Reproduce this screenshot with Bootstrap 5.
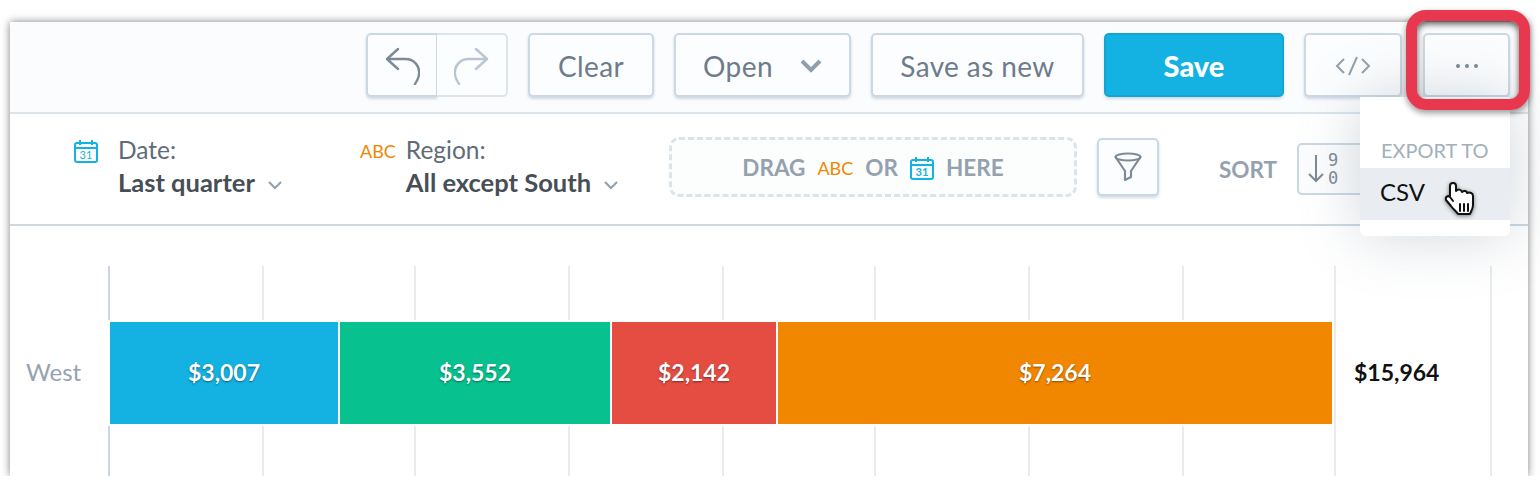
<!DOCTYPE html>
<html lang="en">
<head>
<meta charset="UTF-8" />
<title>Analytical Designer</title>
<link href="https://cdn.jsdelivr.net/npm/bootstrap@5.3.3/dist/css/bootstrap.min.css" rel="stylesheet">
<style>
    body { background: #fff; font-family: Lato, "Open Sans", sans-serif; overflow: hidden; }
    .stage { margin: 22px 12px 0 10px; height: 454px; position: relative; background: #fff; box-shadow: 0 0 8px rgba(0,0,0,.5); }

    /* top toolbar */
    .tool-row { height: 92px; padding: 11px 18px 0 0; background: #fbfcfd; border-bottom: 2px solid #dde4eb; gap: 20px; }
    .tool-btn { height: 64px; padding: 1px 0 0; background: #fcfdfe; border: 2px solid #ccd8e4; border-radius: 5px; color: #6d7c8b; font-size: 28px; letter-spacing: .4px; box-shadow: 0 2px 3px rgba(170,187,204,.55); }
    .tool-btn:hover { background: #fcfdfe; border-color: #ccd8e4; color: #6d7c8b; }
    .w-undo { width: 71px; border-radius: 5px 0 0 5px; border-right-width: 1px; }
    .w-redo, .w-redo:hover { width: 71px; border-radius: 0 5px 5px 0; border-color: #dde4eb; border-left: 0; box-shadow: none; }
    .w-clear { width: 126px; }
    .w-open { width: 177px; gap: 27px; }
    .w-saveas { width: 213px; }
    .w-code { width: 98px; margin-right: 1px; }
    .w-more { width: 87px; }
    .w-save, .w-save:hover { width: 180px; background: #14b2e2; border-color: #12a5d2; color: #fff; font-size: 29px; font-weight: 900; letter-spacing: 0; }

    /* filter row */
    .filter-row { height: 112px; border-bottom: 2px solid #ccd8e2; padding-left: 64px; }
    .pick { font-size: 24.5px; line-height: 32px; color: #5f6c78; margin-top: -6px; }
    .pick strong { display: block; color: #464e56; font-size: 25.5px; font-weight: 700; }
    .pick-date { width: 286px; gap: 20px; }
    .pick-date > svg { margin-top: -1px; }
    .pick-region { width: 309px; gap: 10px; }
    .pick-region > .abc { margin-top: -5px; }
    .abc { color: #f18600; font-size: 18px; line-height: 32px; }
    .caret-ico { margin-left: 12px; vertical-align: 2px; }
    .drop-zone { width: 408px; height: 60px; padding-top: 2px; border: 3px dashed #dce3e9; border-radius: 10px; background: #fcfdfd; gap: 12px; color: #94a1ae; font-size: 22.5px; font-weight: 700; margin-top: -4px; }
    .filter-btn { width: 62px; height: 58px; padding: 0; margin: -4px 0 0 20px; background: #fcfdfe; border: 2px solid #ccd8e4; border-radius: 5px; box-shadow: 0 2px 3px rgba(170,187,204,.55); }
    .sort-word { margin-left: 60px; width: 78px; padding-top: 1px; color: #94a1ae; font-size: 22.5px; font-weight: 700; }
    .sort-btn { width: 90px; height: 52px; padding: 0 0 0 9px; background: #fcfdfe; border: 2px solid #ccd8e4; border-radius: 5px; gap: 4px; }
    .sort-nums { font-family: "DejaVu Sans Mono", monospace; font-size: 17px; line-height: 18px; color: #7d8b99; }

    /* chart */
    .chart-area { height: 250px; padding: 40px 0 0 98px; position: relative; }
    .west { position: absolute; left: 16px; top: 130px; color: #95a3b1; font-size: 24px; line-height: 32px; }
    .plot { height: 210px; border-left: 2px solid #c9d6e8; position: relative; padding-top: 56px; }
    .grid-line { position: absolute; top: 0; bottom: 0; width: 2px; background: #e9ebee; }
    .bars { height: 102px; gap: 2px; position: relative; }
    .bar-seg { height: 102px; padding-bottom: 2px; color: #fff; font-size: 23px; font-weight: 700; text-shadow: 0 1px 2px rgba(0,0,0,.45); box-shadow: 0 0 0 2px #fff; }
    .bar-total { margin: 0 0 2px 20px; color: #111; font-size: 23px; font-weight: 700; }

    /* overlays */
    .export-menu { position: absolute; left: 1350px; top: 75px; width: 150px; height: 139px; background: #fff; border-radius: 0 0 6px 6px; box-shadow: 0 0 60px rgba(90,110,130,.28); padding-top: 41px; }
    .export-head { padding-left: 21px; color: #a2afba; font-size: 20px; line-height: 24px; }
    .export-item { height: 52px; padding-left: 20px; margin-top: 6px; background: #e9edf1; color: #111; font-size: 24px; line-height: 48px; }
    .red-frame { position: absolute; left: 1396px; top: -12px; width: 124px; height: 100px; border: 11px solid #e8384f; border-radius: 20px; box-shadow: 0 3px 6px rgba(0,0,0,.4), inset 0 3px 6px rgba(0,0,0,.65); pointer-events: none; }
    .hand { position: absolute; left: 1430px; top: 158px; filter: drop-shadow(0 1px 2px rgba(0,0,0,.5)); }
</style>
</head>
<body>
<div class="stage">

    <div class="tool-row d-flex justify-content-end">
        <div class="d-flex">
            <button class="btn tool-btn w-undo d-flex align-items-center justify-content-center">
                <svg width="36" height="38" viewBox="0 0 36 38" fill="none" stroke="#7d8b99" stroke-width="2.4" stroke-linecap="round" stroke-linejoin="round"><path d="M14 2 3 12 14 22M3 12H21C31 12 36 20 35 27 35 31 33 34 31 37"/></svg>
            </button>
            <button class="btn tool-btn w-redo d-flex align-items-center justify-content-center">
                <svg width="36" height="38" viewBox="0 0 36 38" fill="none" stroke="#b9c6d2" stroke-width="2.4" stroke-linecap="round" stroke-linejoin="round"><path d="M22 2 33 12 22 22M33 12H15C5 12 0 20 1 27 1 31 3 34 5 37"/></svg>
            </button>
        </div>
        <button class="btn tool-btn w-clear">Clear</button>
        <button class="btn tool-btn w-open d-flex align-items-center justify-content-center">
            Open
            <svg width="22" height="14" viewBox="0 0 22 14" fill="none" stroke="#8f9fad" stroke-width="4" stroke-linejoin="miter"><path d="M2 2 11 11 20 2"/></svg>
        </button>
        <button class="btn tool-btn w-saveas">Save as new</button>
        <button class="btn tool-btn w-save">Save</button>
        <button class="btn tool-btn w-code d-flex align-items-center justify-content-center">
            <svg width="36" height="20" viewBox="0 0 36 20" fill="none" stroke="#94a1ad" stroke-width="2"><path d="M9 3 2 10 9 17M27 3 34 10 27 17M22 1 14 19"/></svg>
        </button>
        <button class="btn tool-btn w-more d-flex align-items-center justify-content-center">
            <svg width="24" height="6" viewBox="0 0 24 6" fill="#7a8a99"><circle cx="3" cy="3" r="2"/><circle cx="12" cy="3" r="2"/><circle cx="21" cy="3" r="2"/></svg>
        </button>
    </div>

    <div class="filter-row d-flex align-items-center">
        <div class="pick-date d-flex align-items-start">
            <svg width="24" height="24" viewBox="0 0 24 24">
                <path d="M3 4H21Q23 4 23 6V21Q23 23 21 23H3Q1 23 1 21V6Q1 4 3 4ZM1 9H23M6 1V6M18 1V6" fill="none" stroke="#14b2e2" stroke-width="2"/>
                <text x="12" y="20" text-anchor="middle" font-family="Lato, sans-serif" font-size="11" fill="#14b2e2">31</text>
            </svg>
            <div class="pick">Date:<strong>Last quarter<svg class="caret-ico" width="16" height="10" viewBox="0 0 16 10" fill="none" stroke="#8f9fad" stroke-width="2"><path d="M2 2 8 8 14 2"/></svg></strong></div>
        </div>
        <div class="pick-region d-flex align-items-start">
            <span class="abc">ABC</span>
            <div class="pick">Region:<strong>All except South<svg class="caret-ico" width="16" height="10" viewBox="0 0 16 10" fill="none" stroke="#8f9fad" stroke-width="2"><path d="M2 2 8 8 14 2"/></svg></strong></div>
        </div>
        <div class="drop-zone d-flex align-items-center justify-content-center">
            <span>DRAG</span>
            <span class="abc fw-normal">ABC</span>
            <span>OR</span>
            <svg width="24" height="24" viewBox="0 0 24 24">
                <path d="M3 4H21Q23 4 23 6V21Q23 23 21 23H3Q1 23 1 21V6Q1 4 3 4ZM1 9H23M6 1V6M18 1V6" fill="none" stroke="#14b2e2" stroke-width="2"/>
                <text x="12" y="20" text-anchor="middle" font-family="Lato, sans-serif" font-size="11" fill="#14b2e2">31</text>
            </svg>
            <span>HERE</span>
        </div>
        <button class="btn filter-btn d-flex align-items-center justify-content-center">
            <svg width="28" height="30" viewBox="0 0 28 30" fill="none" stroke="#7d8b99" stroke-width="2.2" stroke-linejoin="round"><ellipse cx="14" cy="5" rx="12.5" ry="3.5"/><path d="M1.5 5 11 19V28L17 25V19L26.5 5"/></svg>
        </button>
        <div class="sort-word">SORT</div>
        <div class="sort-btn d-flex align-items-center">
            <svg width="16" height="28" viewBox="0 0 16 28" fill="none" stroke="#7d8b99" stroke-width="2"><path d="M8 0V26M1 19 8 26 15 19"/></svg>
            <div class="sort-nums">9<br>0</div>
        </div>
    </div>

    <div class="chart-area">
        <div class="west">West</div>
        <div class="plot">
            <div id="grid"></div>
            <div class="bars d-flex align-items-center" id="bars"></div>
        </div>
    </div>

    <div class="export-menu">
        <div class="export-head">EXPORT TO</div>
        <div class="export-item">CSV</div>
    </div>
    <div class="red-frame"></div>
    <svg class="hand" width="40" height="40" viewBox="0 0 40 40" fill="#fff" stroke="#111" stroke-width="2" stroke-linejoin="round" stroke-linecap="round">
        <path d="M10 16V6C10 2 16 2 16 6V11C18 9 21 9 22 12 24 10 27 11 27 13 30 12 33 13 33 16V25C33 29 31 31 30 34H18C16 31 13 29 11 26L6 20C5 17 8 15 10 17L13 21"/>
        <path d="M20 24V31M24 24V31M28 24V31"/>
    </svg>
</div>

<script>
    const gridX = [263, 415, 569, 723, 875, 1029, 1183, 1335, 1491];
    const segs = [
        { w: 228, c: '#14b2e2', t: '$3,007' },
        { w: 270, c: '#07c28f', t: '$3,552' },
        { w: 164, c: '#e54d42', t: '$2,142' },
        { w: 554, c: '#f18600', t: '$7,264' }
    ];

    document.getElementById('grid').innerHTML = gridX
        .map(x => `<div class="grid-line" style="left:${x - 111}px"></div>`).join('');

    document.getElementById('bars').innerHTML = segs
        .map(s => `<div class="bar-seg d-flex align-items-center justify-content-center" style="width:${s.w}px;background:${s.c}">${s.t}</div>`).join('')
        + '<div class="bar-total">$15,964</div>';
</script>
<script src="https://cdn.jsdelivr.net/npm/bootstrap@5.3.3/dist/js/bootstrap.bundle.min.js"></script>
</body>
</html>
